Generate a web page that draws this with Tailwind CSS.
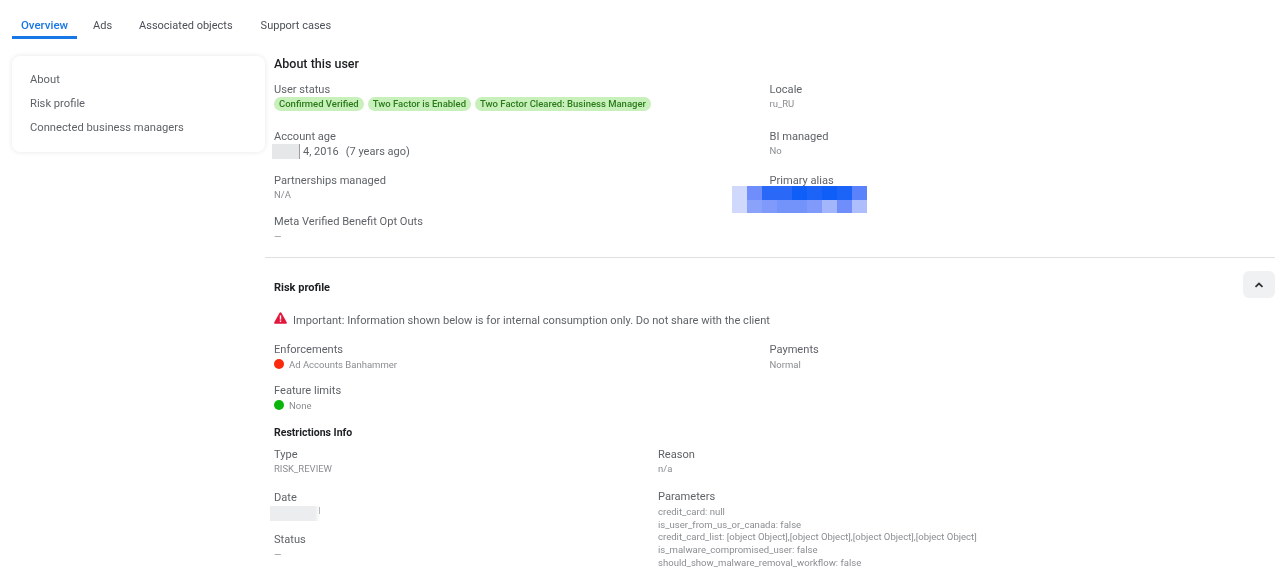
<!DOCTYPE html>
<html lang="en">
<head>
    <meta charset="UTF-8">
    <title>User overview</title>
    <script src="https://cdn.jsdelivr.net/npm/@tailwindcss/browser@4"></script>
</head>
<body class="bg-white font-['Roboto',sans-serif] text-[#5f6368] overflow-hidden">
<div class="h-[586px] w-[1280px] overflow-hidden blur-[0.35px]">
    <!-- tabs -->
    <nav class="flex h-[56px] pl-[12px] text-[11px] leading-[14px]">
        <a class="mt-[18px] h-[21px] w-[65px] border-b-[3px] border-[#1877e6] text-center text-[11.5px] font-medium text-[#1877e6]">Overview</a>
        <a class="ml-[16px] mt-[19px] text-[#4b4f56]">Ads</a>
        <a class="ml-[27px] mt-[19px] text-[#4b4f56]">Associated objects</a>
        <a class="ml-[28px] mt-[19px] text-[#4b4f56]">Support cases</a>
    </nav>

    <div class="flex">
        <!-- side menu -->
        <aside class="ml-[12px] flex h-[96px] w-[253px] flex-col gap-[10px] rounded-lg pl-[18px] pt-[17px] text-[11.2px] leading-[14px] text-[#5f6368] shadow-[0_0_5px_rgba(0,0,0,0.1)]">
            <a>About</a>
            <a>Risk profile</a>
            <a>Connected business managers</a>
        </aside>

        <main class="w-[1010px]">
            <!-- about -->
            <section class="h-[202px] border-b border-[#dfe0e2] pl-[9px]">
                <h2 class="pt-[1px] text-[12.5px] font-medium leading-[14px] text-[#1c1e21]">About this user</h2>
                <div class="mt-[12px] grid grid-cols-[495.5px_1fr]">
                    <div>
                        <p class="text-[11.1px] leading-[14px]">User status</p>
                        <div class="flex gap-[4px] text-[9.5px] font-medium leading-[14px] text-[#2a7a1c]">
                            <span class="rounded-full bg-[#c8f0ba] px-[5px]">Confirmed Verified</span>
                            <span class="rounded-full bg-[#c8f0ba] px-[5px]">Two Factor is Enabled</span>
                            <span class="rounded-full bg-[#c8f0ba] px-[5px]">Two Factor Cleared: Business Manager</span>
                        </div>
                        <p class="mt-[19px] text-[11.1px] leading-[14px]">Account age</p>
                        <div class="flex h-[15px] text-[11px] leading-[15px]">
                            <span class="-ml-[2px] mr-[1px] h-[15px] w-[28px] border-r border-[#9a9ca0] bg-[#e6e7e9]"></span>
                            <span class="ml-[2px]">4, 2016</span>
                            <span class="ml-[7px]">(7 years ago)</span>
                        </div>
                        <p class="mt-[15px] text-[11.1px] leading-[14px]">Partnerships managed</p>
                        <p class="text-[9.5px] leading-[14px] text-[#8a8d91]">N/A</p>
                        <p class="mt-[13px] text-[11.1px] leading-[14px]">Meta Verified Benefit Opt Outs</p>
                        <p class="mt-[1px] text-[9.5px] leading-[14px] text-[#8a8d91]">—</p>
                    </div>
                    <div>
                        <p class="text-[11.1px] leading-[14px]">Locale</p>
                        <p class="text-[9.5px] leading-[14px] text-[#8a8d91]">ru_RU</p>
                        <p class="mt-[19px] text-[11.1px] leading-[14px]">BI managed</p>
                        <p class="text-[9.5px] leading-[14px] text-[#8a8d91]">No</p>
                        <p class="mt-[16px] text-[11.1px] leading-[14px]">Primary alias</p>
                        <!-- pixelated redaction -->
                        <div class="-mt-[2px] -ml-[38px] grid w-[135px] grid-cols-9">
                            <div class="h-[14px] bg-[#d0d8fb]"></div><div class="bg-[#6f8dfb]"></div><div class="bg-[#2a68f8]"></div><div class="bg-[#2a68f8]"></div><div class="bg-[#0f5ef8]"></div><div class="bg-[#1c63f8]"></div><div class="bg-[#0f5ef8]"></div><div class="bg-[#1c63f8]"></div><div class="bg-[#5c82fb]"></div>
                            <div class="h-[13px] bg-[#d0d8fb]"></div><div class="bg-[#8ba2fb]"></div><div class="bg-[#7f9afb]"></div><div class="bg-[#7393fb]"></div><div class="bg-[#7393fb]"></div><div class="bg-[#7f9afb]"></div><div class="bg-[#a3b5fb]"></div><div class="bg-[#6f8dfb]"></div><div class="bg-[#aebdfc]"></div>
                        </div>
                    </div>
                </div>
            </section>

            <!-- risk profile -->
            <section class="pl-[9px]">
                <div class="flex h-[56px] items-start justify-between">
                    <h3 class="mt-[23px] text-[11px] font-bold leading-[14px] text-[#1c1e21]">Risk profile</h3>
                    <button class="mt-[13px] flex h-[27px] w-[32px] items-center justify-center rounded-md bg-[#f0f1f2]">
                        <svg width="10" height="6" viewBox="0 0 10 6"><path d="M1.5 4.8 5 1.5l3.5 3.3" fill="none" stroke="#303338" stroke-width="1.8"/></svg>
                    </button>
                </div>
                <div class="flex h-[14px] items-center text-[11.1px] leading-[14px]">
                    <svg class="-mt-[7px]" width="13" height="12" viewBox="0 0 13 12"><path d="M6.5.3c.4 0 .7.2.9.5l5.3 9.4c.4.7-.1 1.5-.9 1.5H1.2c-.8 0-1.3-.8-.9-1.5L5.6.8c.2-.3.5-.5.9-.5z" fill="#e4163c"/><rect x="5.8" y="3.4" width="1.4" height="4.2" fill="#fff"/><rect x="5.8" y="8.5" width="1.4" height="1.4" fill="#fff"/></svg>
                    <span class="ml-[6px]">Important: Information shown below is for internal consumption only. Do not share with the client</span>
                </div>
                <div class="mt-[15px] grid grid-cols-[495.5px_1fr]">
                    <div>
                        <p class="text-[11.1px] leading-[14px]">Enforcements</p>
                        <div class="mt-[1px] flex h-[14px] items-center text-[9.5px] text-[#8a8d91]">
                            <span class="-mt-[2px] h-[10px] w-[10px] rounded-full bg-[#fa2a0c]"></span>
                            <span class="ml-[5px]">Ad Accounts Banhammer</span>
                        </div>
                        <p class="mt-[12px] text-[11.1px] leading-[14px]">Feature limits</p>
                        <div class="mt-[1px] flex h-[14px] items-center text-[9.5px] text-[#8a8d91]">
                            <span class="-mt-[2px] h-[10px] w-[10px] rounded-full bg-[#0cb50c]"></span>
                            <span class="ml-[5px]">None</span>
                        </div>
                    </div>
                    <div>
                        <p class="text-[11.1px] leading-[14px]">Payments</p>
                        <p class="mt-[1px] text-[9.5px] leading-[14px] text-[#8a8d91]">Normal</p>
                    </div>
                </div>
                <h3 class="mt-[13px] text-[10.5px] font-bold leading-[14px] text-[#1c1e21]">Restrictions Info</h3>
                <div class="mt-[8px] grid grid-cols-[384px_1fr]">
                    <div>
                        <p class="text-[11.1px] leading-[14px]">Type</p>
                        <p class="text-[9.5px] leading-[14px] text-[#8a8d91]">RISK_REVIEW</p>
                        <p class="mt-[15px] text-[11.1px] leading-[14px]">Date</p>
                        <div class="-ml-[4px] mt-[1px] flex h-[15px] w-[50px] justify-end bg-[linear-gradient(to_right,#ecedee_90%,#fff)]">
                            <span class="mt-[1px] h-[7px] w-px bg-[#b5b7ba]"></span>
                        </div>
                        <p class="mt-[12px] text-[11.1px] leading-[14px]">Status</p>
                        <p class="mt-[1px] text-[9.5px] leading-[14px] text-[#8a8d91]">—</p>
                    </div>
                    <div>
                        <p class="text-[11.1px] leading-[14px]">Reason</p>
                        <p class="text-[9.5px] leading-[14px] text-[#8a8d91]">n/a</p>
                        <p class="mt-[14px] text-[11.1px] leading-[14px]">Parameters</p>
                        <div class="mt-[2px] text-[9.56px] leading-[12.7px] text-[#8a8d91]">
                            <p>credit_card: null</p>
                            <p>is_user_from_us_or_canada: false</p>
                            <p>credit_card_list: [object Object],[object Object],[object Object],[object Object]</p>
                            <p>is_malware_compromised_user: false</p>
                            <p>should_show_malware_removal_workflow: false</p>
                        </div>
                    </div>
                </div>
            </section>
        </main>
    </div>
</div>
</body>
</html>
